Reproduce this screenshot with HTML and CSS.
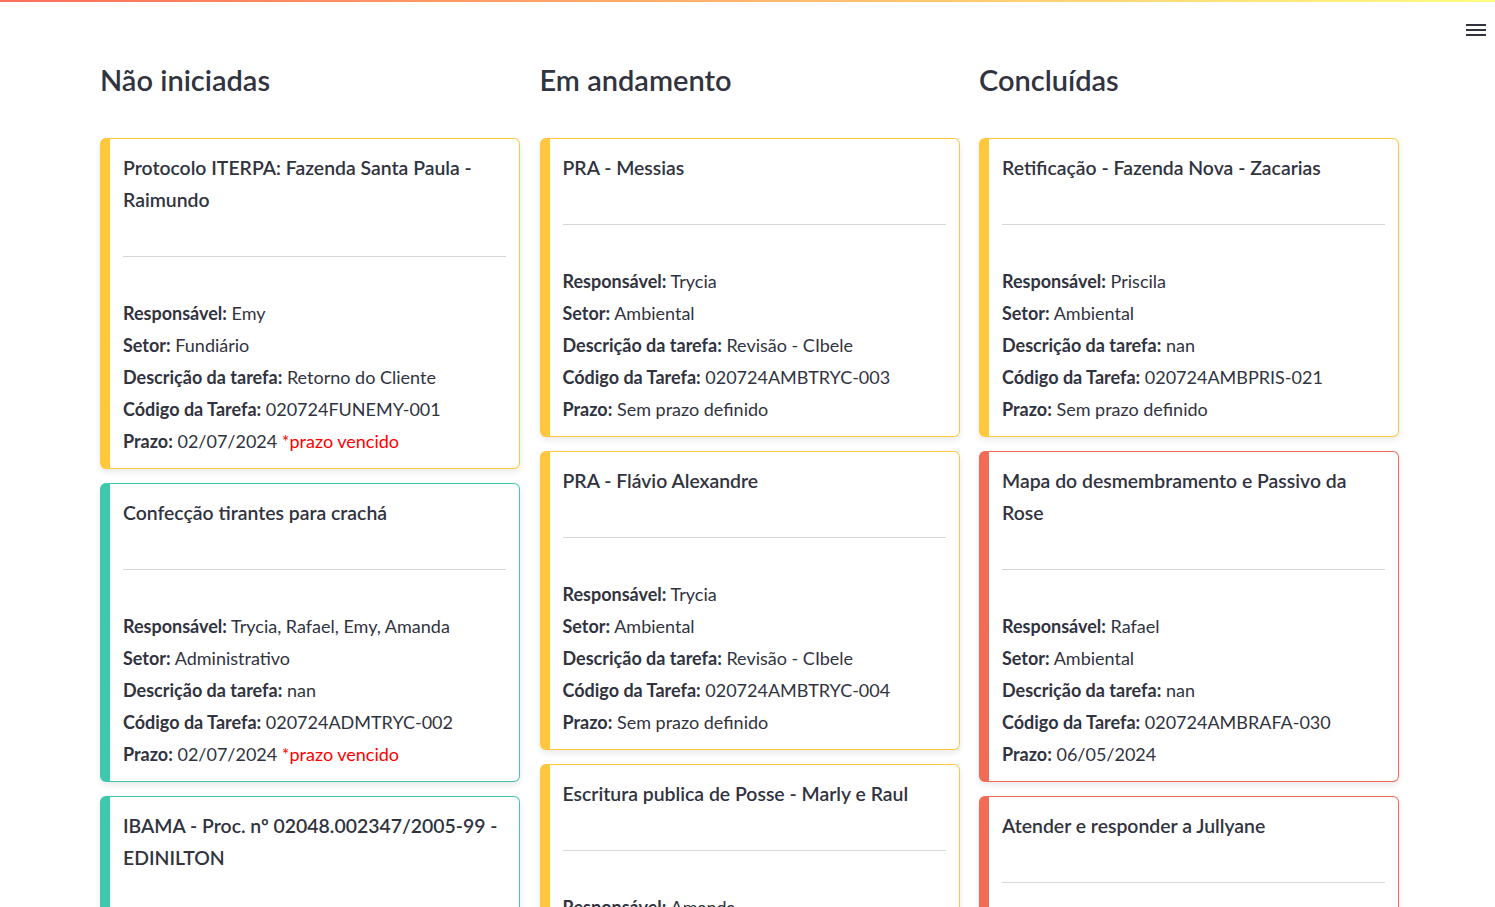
FILE: index.html
```html
<!DOCTYPE html>
<html lang="pt">
<head>
<meta charset="utf-8">
<title>Tarefas</title>
<link rel="stylesheet" href="styles.css">
</head>
<body>
<div class="decoration"></div>
<header class="topbar">
  <button class="menu" aria-label="menu">
    <svg width="20" height="14" viewBox="0 0 20 14"><rect x="0" y="1" width="20" height="2" fill="#31333f"/><rect x="0" y="6" width="20" height="2" fill="#31333f"/><rect x="0" y="11" width="20" height="2" fill="#31333f"/></svg>
  </button>
</header>
<main class="board">
  <section class="column">
    <h2 class="col-title">Não iniciadas</h2>
    <div class="card yellow">
      <h3 class="card-title">Protocolo ITERPA: Fazenda Santa Paula - Raimundo</h3>
      <hr>
      <p><b>Responsável:</b> Emy</p>
      <p><b>Setor:</b> Fundiário</p>
      <p><b>Descrição da tarefa:</b> Retorno do Cliente</p>
      <p><b>Código da Tarefa:</b> 020724FUNEMY-001</p>
      <p><b>Prazo:</b> 02/07/2024 <span class="late">*prazo vencido</span></p>
    </div>
    <div class="card teal">
      <h3 class="card-title">Confecção tirantes para crachá</h3>
      <hr>
      <p><b>Responsável:</b> Trycia, Rafael, Emy, Amanda</p>
      <p><b>Setor:</b> Administrativo</p>
      <p><b>Descrição da tarefa:</b> nan</p>
      <p><b>Código da Tarefa:</b> 020724ADMTRYC-002</p>
      <p><b>Prazo:</b> 02/07/2024 <span class="late">*prazo vencido</span></p>
    </div>
    <div class="card teal">
      <h3 class="card-title">IBAMA - Proc. nº 02048.002347/2005-99 - EDINILTON</h3>
      <hr>
      <p><b>Responsável:</b> Amanda</p>
    </div>
  </section>
  <section class="column">
    <h2 class="col-title">Em andamento</h2>
    <div class="card yellow">
      <h3 class="card-title">PRA - Messias</h3>
      <hr>
      <p><b>Responsável:</b> Trycia</p>
      <p><b>Setor:</b> Ambiental</p>
      <p><b>Descrição da tarefa:</b> Revisão - CIbele</p>
      <p><b>Código da Tarefa:</b> 020724AMBTRYC-003</p>
      <p><b>Prazo:</b> Sem prazo definido</p>
    </div>
    <div class="card yellow">
      <h3 class="card-title">PRA - Flávio Alexandre</h3>
      <hr>
      <p><b>Responsável:</b> Trycia</p>
      <p><b>Setor:</b> Ambiental</p>
      <p><b>Descrição da tarefa:</b> Revisão - CIbele</p>
      <p><b>Código da Tarefa:</b> 020724AMBTRYC-004</p>
      <p><b>Prazo:</b> Sem prazo definido</p>
    </div>
    <div class="card yellow">
      <h3 class="card-title">Escritura publica de Posse - Marly e Raul</h3>
      <hr>
      <p><b>Responsável:</b> Amanda</p>
      <p><b>Setor:</b> Fundiário</p>
    </div>
  </section>
  <section class="column">
    <h2 class="col-title">Concluídas</h2>
    <div class="card yellow">
      <h3 class="card-title">Retificação - Fazenda Nova - Zacarias</h3>
      <hr>
      <p><b>Responsável:</b> Priscila</p>
      <p><b>Setor:</b> Ambiental</p>
      <p><b>Descrição da tarefa:</b> nan</p>
      <p><b>Código da Tarefa:</b> 020724AMBPRIS-021</p>
      <p><b>Prazo:</b> Sem prazo definido</p>
    </div>
    <div class="card red">
      <h3 class="card-title">Mapa do desmembramento e Passivo da Rose</h3>
      <hr>
      <p><b>Responsável:</b> Rafael</p>
      <p><b>Setor:</b> Ambiental</p>
      <p><b>Descrição da tarefa:</b> nan</p>
      <p><b>Código da Tarefa:</b> 020724AMBRAFA-030</p>
      <p><b>Prazo:</b> 06/05/2024</p>
    </div>
    <div class="card red">
      <h3 class="card-title">Atender e responder a Jullyane</h3>
      <hr>
      <p><b>Responsável:</b> Rafael</p>
    </div>
  </section>
</main>
</body>
</html>
```
FILE: styles.css
```css
html, body {
  margin: 0;
  padding: 0;
  background: #ffffff;
  color: #31333f;
  font-family: "Lato", "Noto Sans", sans-serif;
  height: 907px;
  overflow: hidden;
}

.decoration {
  height: 2px;
  background: linear-gradient(90deg, #ff6e5a, #fffd80);
}

.topbar {
  position: absolute;
  top: 2px;
  right: 0;
  height: 56px;
  display: flex;
  align-items: flex-start;
}

.menu {
  border: none;
  background: transparent;
  padding: 0;
  margin: 21px 9px 0 0;
  width: 20px;
  height: 14px;
  display: block;
}
.menu svg { display: block; }

.board {
  display: grid;
  grid-template-columns: repeat(3, 420px);
  column-gap: 19.5px;
  padding: 0 0 0 100px;
}

.column {
  display: flex;
  flex-direction: column;
  gap: 14px;
}

.col-title {
  margin: 58px 0 24px 0;
  font-size: 29px;
  line-height: 40px;
  font-weight: 600;
  color: #31333f;
}

.card {
  border: 1px solid;
  border-left-width: 10px;
  border-radius: 6px;
  padding: 13px 13px 11px 13px;
  box-shadow: 0 3px 6px rgba(0, 0, 0, 0.09);
  background: #fff;
}
.card.yellow { border-color: #ffc83c; }
.card.teal { border-color: #3fc8ae; }
.card.red { border-color: #f26b55; }

.card-title {
  margin: 0;
  font-size: 19.4px;
  line-height: 32px;
  font-weight: 600;
}

.card hr {
  border: none;
  border-top: 1px solid #d6d6d9;
  margin: 40px 0 40px 0;
}

.card p {
  margin: 0;
  font-size: 18px;
  line-height: 32px;
  font-weight: 400;
}
.card p b { font-weight: 700; }

.late { color: #ff0000; }
```
